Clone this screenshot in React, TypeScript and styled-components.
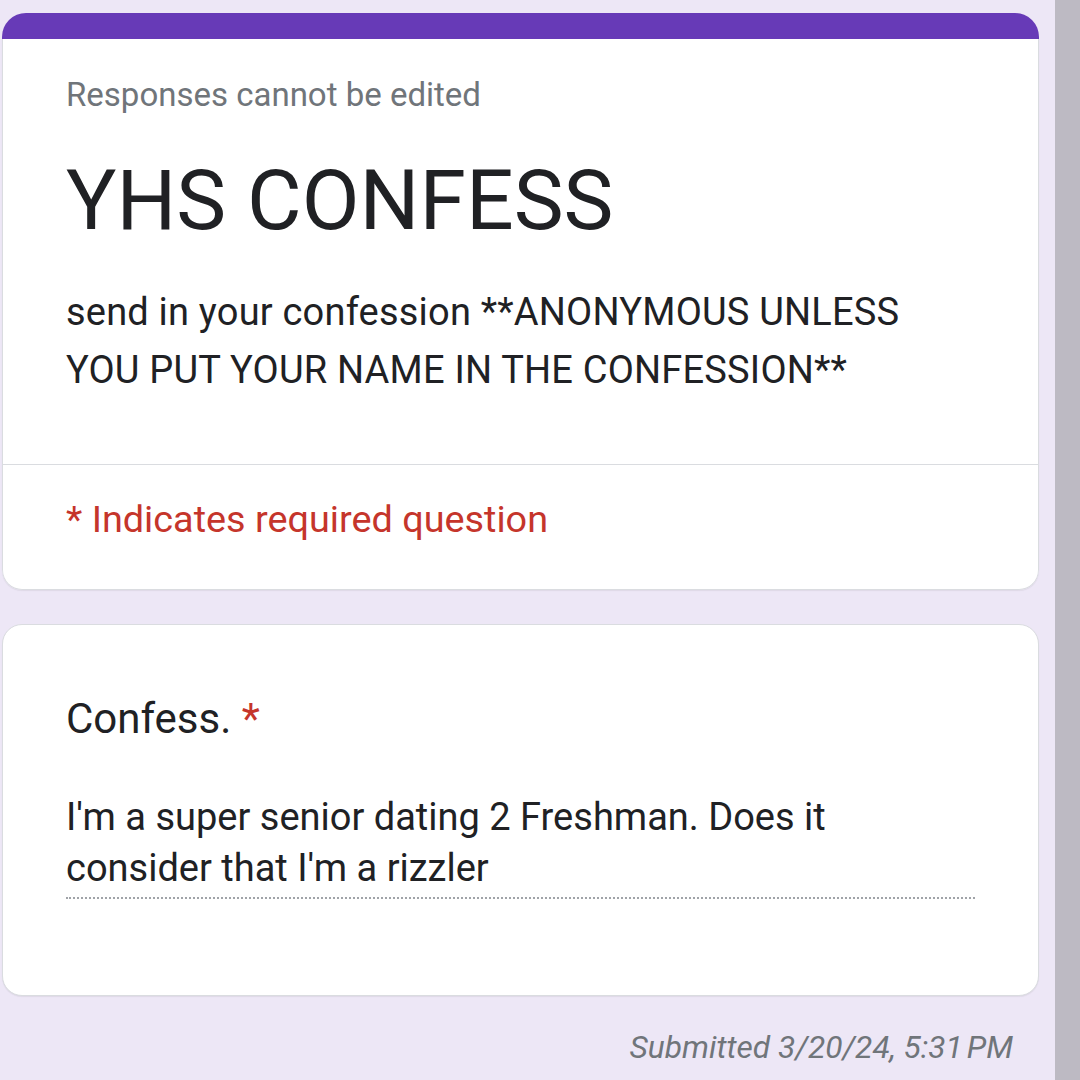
import styled, { createGlobalStyle } from "styled-components";

const GlobalStyle = createGlobalStyle`
  html, body {
    margin: 0;
    padding: 0;
    background: #ede7f6;
  }
  body {
    font-family: Roboto, "Liberation Sans", sans-serif;
    color: #202124;
  }
`;

export default function App() {
  return (
    <>
      <GlobalStyle />
      <Page>
        <Main>
          <HeaderCard>
            <Band />
            <HeaderBody>
              <Intro>
                <Notice>Responses cannot be edited</Notice>
                <Title>YHS CONFESS</Title>
                <Description>
                  send in your confession **ANONYMOUS UNLESS YOU PUT YOUR NAME
                  IN THE CONFESSION**
                </Description>
              </Intro>
              <Required>* Indicates required question</Required>
            </HeaderBody>
          </HeaderCard>

          <QuestionCard>
            <Question>
              Confess. <Star>*</Star>
            </Question>
            <Answer>
              I'm a super senior dating 2 Freshman. Does it consider that I'm a
              rizzler
            </Answer>
          </QuestionCard>

          <Submitted>Submitted 3/20/24, 5:31&#8239;PM</Submitted>
        </Main>
        <Scrollbar />
      </Page>
    </>
  );
}

const Page = styled.div`
  display: flex;
  width: 1080px;
  height: 1080px;
  overflow: hidden;
  background: #ede7f6;
`;

const Main = styled.div`
  flex: 1;
  display: flex;
  flex-direction: column;
  gap: 34px;
  padding: 13px 16px 0 2px;
`;

const Scrollbar = styled.div`
  width: 25px;
  flex-shrink: 0;
  background: #bdbac3;
`;

const HeaderCard = styled.div`
  border-radius: 24px 24px 20px 20px;
  overflow: hidden;
  box-shadow: 0 1px 1px rgba(60, 64, 67, 0.08);
`;

const Band = styled.div`
  height: 26px;
  background: #673ab7;
`;

const HeaderBody = styled.div`
  background: #fff;
  border: 1px solid #dadce0;
  border-top: none;
  border-radius: 0 0 20px 20px;
`;

const Intro = styled.div`
  display: flex;
  flex-direction: column;
  padding: 36px 63px 65px;
  border-bottom: 1px solid #dadce0;
`;

const Notice = styled.div`
  font-size: 33px;
  line-height: 40px;
  color: #70757a;
`;

const Title = styled.h1`
  margin: 36px 0 0;
  font-size: 84px;
  line-height: 100px;
  font-weight: 400;
  color: #202124;
`;

const Description = styled.div`
  margin-top: 32px;
  font-size: 38px;
  line-height: 58px;
  letter-spacing: 0.2px;
  color: #202124;
`;

const Required = styled.div`
  padding: 32px 63px 48px;
  font-size: 37.8px;
  line-height: 44px;
  color: #c5352b;
`;

const QuestionCard = styled.div`
  background: #fff;
  border: 1px solid #dadce0;
  border-radius: 20px;
  padding: 70px 63px 96px;
  box-shadow: 0 1px 1px rgba(60, 64, 67, 0.08);
`;

const Question = styled.div`
  font-size: 42px;
  line-height: 48px;
  color: #202124;
`;

const Star = styled.span`
  color: #c5352b;
`;

const Answer = styled.div`
  margin-top: 49px;
  padding-bottom: 3px;
  font-size: 38px;
  line-height: 51px;
  color: #202124;
  border-bottom: 2px dotted #a0a3a8;
`;

const Submitted = styled.div`
  align-self: flex-end;
  margin-right: 26px;
  font-size: 31.7px;
  line-height: 36px;
  font-style: italic;
  color: #70757a;
`;
